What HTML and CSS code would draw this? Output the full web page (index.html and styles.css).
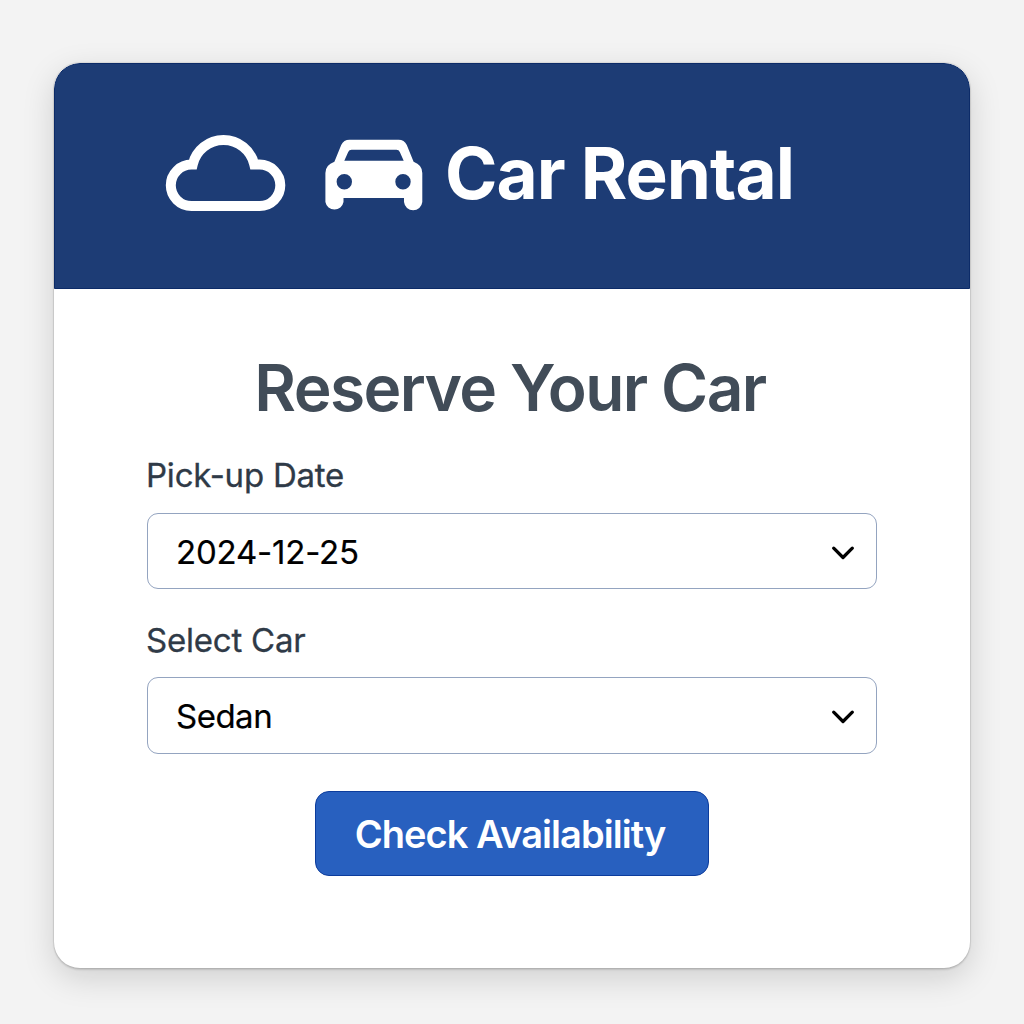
FILE: index.html
```html
<!DOCTYPE html>
<html lang="en">
<head>
<meta charset="utf-8">
<title>Car Rental</title>
<link rel="stylesheet" href="styles.css">
</head>
<body>
<main class="card">
  <header class="header">
    <svg class="cloud" viewBox="165 134 121 78" aria-hidden="true">
      <path d="M191.5 206A20.7 20.7 0 0 1 191.5 164.6H192.7A31.6 31.6 0 0 1 254.3 164.6H259.6A20.7 20.7 0 0 1 259.6 206Z"/>
    </svg>
    <svg class="car" viewBox="325 139 98 73" aria-hidden="true">
      <path fill-rule="evenodd" d="M349.5 139.8H398.5Q404.3 139.8 406.8 145L413.6 161.8Q422.3 165 422.3 173V202A9.2 9.2 0 0 1 404 202V198H343.5V202A9.2 9.2 0 0 1 325.4 202V173Q325.4 165 334.4 161.8L341.2 145Q343.7 139.8 349.5 139.8ZM351.5 149.8Q349.2 149.8 348.2 152L344.3 160.7H403.7L399.8 152Q398.8 149.8 396.5 149.8ZM336.6 181.7A7.7 7.7 0 1 0 352 181.7A7.7 7.7 0 1 0 336.6 181.7ZM395.3 181.7A7.7 7.7 0 1 0 410.7 181.7A7.7 7.7 0 1 0 395.3 181.7Z"/>
    </svg>
    <h1 class="brand">Car Rental</h1>
  </header>
  <form class="form">
    <h2 class="title">Reserve Your Car</h2>
    <div class="label label-date">Pick-up Date</div>
    <div class="field field-date">
      <span class="value value-date">2024-12-25</span>
      <svg class="chevron" viewBox="0 0 24 16" aria-hidden="true"><path d="M2.7 3.2L12 12.5L21.3 3.2"/></svg>
    </div>
    <div class="label label-car">Select Car</div>
    <div class="field field-car">
      <span class="value value-car">Sedan</span>
      <svg class="chevron" viewBox="0 0 24 16" aria-hidden="true"><path d="M2.7 3.2L12 12.5L21.3 3.2"/></svg>
    </div>
    <button class="submit" type="button">Check Availability</button>
  </form>
</main>
</body>
</html>
```
FILE: styles.css
```css
* { box-sizing: border-box; }

body {
  margin: 0;
  height: 1024px;
  padding: 63px 54px 56px;
  overflow: hidden;
  background: #f3f3f3;
  font-family: Inter, "Liberation Sans", sans-serif;
}

.card {
  width: 916px;
  height: 905px;
  border-radius: 26px;
  overflow: hidden;
  background: #fff;
  box-shadow: 0 0 1px 1px rgba(0, 0, 0, .08), 0 2px 2px rgba(0, 0, 0, .12), 0 10px 32px rgba(0, 0, 0, .15);
}

.header {
  display: flex;
  align-items: flex-start;
  height: 226px;
  padding: 70px 0 0 110px;
  background: #1d3c75;
  border: 1px solid #0c2b68;
  border-radius: 26px 26px 0 0;
}

.cloud {
  flex: none;
  width: 121px;
  height: 78px;
  fill: none;
  stroke: #fff;
  stroke-width: 10;
}

.car {
  flex: none;
  width: 98px;
  height: 73px;
  margin: 5px 0 0 39px;
  fill: #fff;
}

.brand {
  margin: 0 0 0 22px;
  font-size: 71px;
  line-height: 78px;
  font-weight: 650;
  letter-spacing: -.95px;
  color: #fff;
  white-space: nowrap;
}

.form {
  display: flex;
  flex-direction: column;
  padding: 60px 93px 0;
}

.title {
  margin: 0;
  padding-right: 4px;
  height: 78px;
  font-size: 64px;
  line-height: 78px;
  font-weight: 600;
  letter-spacing: -1.6px;
  text-align: center;
  color: #414c58;
  white-space: nowrap;
}

.label {
  margin-left: -1px;
  font-size: 33px;
  line-height: 40px;
  letter-spacing: -.22px;
  color: #2f3a47;
  -webkit-text-stroke: .3px #2f3a47;
  white-space: nowrap;
}

.label-date { margin-top: 28px; }
.label-car { margin-top: 31px; }

.field {
  display: flex;
  align-items: center;
  justify-content: space-between;
  width: 730px;
  height: 76px;
  padding: 2px 21px 0 28px;
  border: 1px solid #94a4c0;
  border-radius: 11px;
  font-size: 33px;
  line-height: 40px;
  color: #000;
  -webkit-text-stroke: .2px #000;
}

.field-date { margin-top: 18px; }
.field-car { height: 77px; margin-top: 17px; }
.value-date { letter-spacing: -.2px; }
.value-car { padding-bottom: 2px; letter-spacing: -.5px; }

.chevron {
  width: 24px;
  height: 16px;
  fill: none;
  stroke: #000;
  stroke-width: 3.3;
  stroke-linecap: round;
  stroke-linejoin: round;
}

.field-date .chevron { margin-top: 1px; }

.submit {
  align-self: center;
  width: 394px;
  height: 85px;
  margin-top: 37px;
  padding: 1px 4px 0 0;
  border: 1px solid #0c3c9c;
  border-radius: 14px;
  background: #2860bf;
  color: #fff;
  font: 600 38px/46px Inter, "Liberation Sans", sans-serif;
  letter-spacing: -.95px;
  white-space: nowrap;
}
```
